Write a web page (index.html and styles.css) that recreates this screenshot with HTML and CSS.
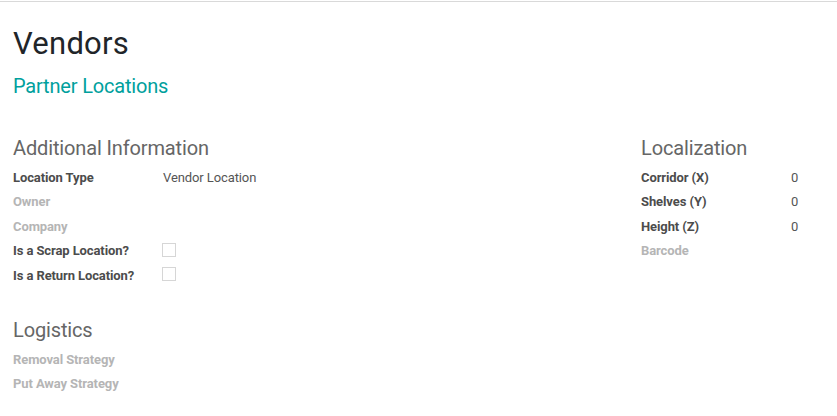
FILE: index.html
```html
<!DOCTYPE html>
<html lang="en">
<head>
    <meta charset="UTF-8">
    <meta name="viewport" content="width=device-width, initial-scale=1.0">
    <title>Vendors</title>
    <link rel="stylesheet" href="styles.css">
</head>
<body>
    <div class="sheet">
        <div class="title">
            <h1>Vendors</h1>
            <h2>Partner Locations</h2>
        </div>

        <div class="groups">
            <div class="group">
                <div class="separator">Additional Information</div>
                <div class="row">
                    <span class="label">Location Type</span>
                    <span class="value">Vendor Location</span>
                </div>
                <div class="row">
                    <span class="label muted">Owner</span>
                </div>
                <div class="row">
                    <span class="label muted">Company</span>
                </div>
                <div class="row">
                    <span class="label">Is a Scrap Location?</span>
                    <span class="check"></span>
                </div>
                <div class="row">
                    <span class="label">Is a Return Location?</span>
                    <span class="check"></span>
                </div>
            </div>

            <div class="group">
                <div class="separator">Localization</div>
                <div class="row">
                    <span class="label">Corridor (X)</span>
                    <span class="value">0</span>
                </div>
                <div class="row">
                    <span class="label">Shelves (Y)</span>
                    <span class="value">0</span>
                </div>
                <div class="row">
                    <span class="label">Height (Z)</span>
                    <span class="value">0</span>
                </div>
                <div class="row">
                    <span class="label muted">Barcode</span>
                </div>
            </div>
        </div>

        <div class="group logistics">
            <div class="separator">Logistics</div>
            <div class="row">
                <span class="label muted">Removal Strategy</span>
            </div>
            <div class="row">
                <span class="label muted">Put Away Strategy</span>
            </div>
        </div>
    </div>
</body>
</html>
```

FILE: styles.css
```css
/* Reset */
* {
    margin: 0;
    padding: 0;
    box-sizing: border-box;
}

body {
    font-family: Roboto, "Noto Sans", sans-serif;
    background: #fff;
    color: #4c4c4c;
    padding-top: 1px;
}

/* Sheet */
.sheet {
    border-top: 1px solid #d9d9d9;
    padding: 24.4px 13px 0;
}

/* Title */
.title h1 {
    font-size: 31px;
    line-height: 36px;
    font-weight: 400;
    color: #212529;
    letter-spacing: 0.25px;
}

.title h2 {
    font-size: 20px;
    line-height: 24px;
    font-weight: 400;
    color: #00a09d;
    margin-top: 11.8px;
    letter-spacing: -0.18px;
}

/* Groups */
.groups {
    display: grid;
    grid-template-columns: 1fr 183px;
    margin-top: 38px;
}

.separator {
    font-size: 20px;
    line-height: 24px;
    color: #666;
    margin-bottom: 4.7px;
    letter-spacing: -0.14px;
}

.row {
    display: flex;
    align-items: center;
    height: 24.5px;
    font-size: 13px;
    letter-spacing: -0.1px;
}

.label {
    width: 150px;
    flex: none;
    font-weight: 700;
    color: #4c4c4c;
}

.label.muted {
    color: #b5b5b5;
}

.value {
    color: #555;
}

.check {
    width: 14px;
    height: 14px;
    border: 1px solid #d6d6d6;
    background: #fff;
    margin: 0 0 2px -1px;
}

/* Logistics */
.logistics {
    margin-top: 30.8px;
}
```
